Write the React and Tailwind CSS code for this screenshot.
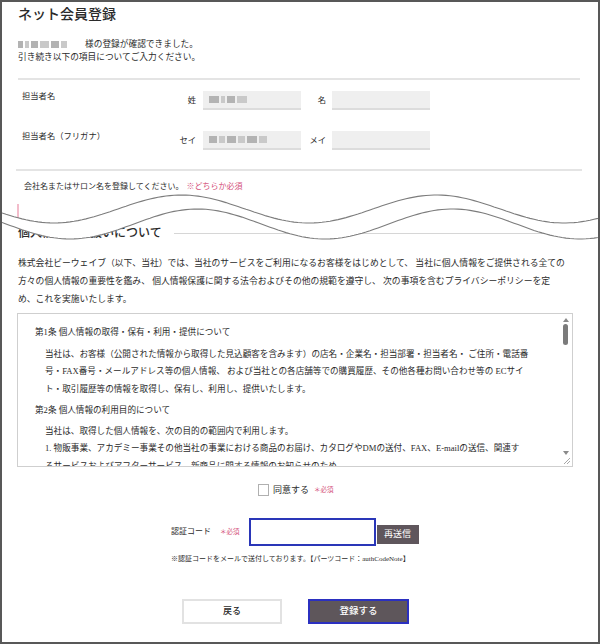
import React from 'react';

const PINK = 'text-[#d4507a]';

// 破れ目の波線（上下2本）
const PERIOD = 255;
const wavePoints = (base, amp, shift, top) => {
  const pts = [];
  for (let x = -4; x <= 604; x += 4) {
    const y = base + amp * Math.cos((2 * Math.PI * (x - shift)) / PERIOD) - top;
    pts.push([x, +y.toFixed(1)]);
  }
  return pts;
};

const WAVE_TOP = 185;
const upper = wavePoints(209, 14, 52, WAVE_TOP);
const lower = wavePoints(224, 15, 68, WAVE_TOP);
const toLine = (pts) => pts.map((p, i) => (i === 0 ? 'M' : 'L') + p[0] + ',' + p[1]).join(' ');
const band = toLine(upper) + ' ' + [...lower].reverse().map((p) => 'L' + p[0] + ',' + p[1]).join(' ') + ' Z';

const Blur = ({ parts, className = '' }) => (
  <span className={'inline-flex items-center gap-[2px] blur-[0.7px] ' + className}>
    {parts.map((w, i) => (
      <span key={i} className={i % 2 ? 'h-[7px] bg-[#c9c9c9]' : 'h-[7px] bg-[#b3b3b3]'} style={{ width: w }} />
    ))}
  </span>
);

const Field = ({ children }) => (
  <div className="ml-[5px] w-[98px] h-[19px] bg-[#efefef] border-b-2 border-[#dcdcdc] flex items-center pl-[6px]">
    {children}
  </div>
);

const App = () => {
  return (
    <div className="w-[600px] h-[644px] border-2 border-[#585858] bg-white relative overflow-hidden text-[#2b2b2b] font-['Liberation_Serif','Noto_Sans_CJK_JP',serif]">
      <div className="pl-4 pr-[18px] pt-[3px]">
        <h1 className="text-[14px] leading-[20px] font-medium">ネット会員登録</h1>

        <div className="mt-[13px] text-[8.7px] leading-[13px]">
          <div className="flex items-center">
            <span className="w-[47px] flex">
              <Blur parts={[5, 4, 7, 9, 8, 6]} />
            </span>
            <span className="ml-[20px]">様の登録が確認できました。</span>
          </div>
          <div>引き続き以下の項目についてご入力ください。</div>
        </div>

        <div className="mt-[14px] h-[2px] bg-[#e4e4e4]" />

        {/* 担当者名 */}
        <div className="mt-[11px] flex items-start text-[8.3px] leading-[12px]">
          <div className="w-[160px] pl-[4px]">担当者名</div>
          <div className="flex items-center">
            <span className="w-[20px] text-right pr-[2px]">姓</span>
            <Field>
              <Blur parts={[10, 4, 8, 10]} />
            </Field>
            <span className="w-[26px] text-right pr-[1px]">名</span>
            <Field />
          </div>
        </div>

        <div className="mt-[21px] flex items-start text-[8.3px] leading-[12px]">
          <div className="w-[160px] pl-[4px]">担当者名（フリガナ）</div>
          <div className="flex items-center">
            <span className="w-[20px] text-right pr-[2px]">セイ</span>
            <Field>
              <Blur parts={[8, 6, 9, 7, 10, 8]} />
            </Field>
            <span className="w-[26px] text-right pr-[1px]">メイ</span>
            <Field />
          </div>
        </div>

        <div className="mt-[19px] -mx-[2px] h-[2px] bg-[#e4e4e4]" />

        <div className="mt-[10px] pl-[6px] text-[8px] leading-[12px]">
          会社名またはサロン名を登録してください。<span className={'ml-[3px] ' + PINK}>※どちらか必須</span>
        </div>

        <div className="mt-[11px] -ml-[1px] w-[2px] h-[14px] bg-[#f3bccb]" />

        {/* 個人情報の取扱い */}
        <div className="mt-[7px] mr-[7px] flex items-center">
          <h2 className="text-[12px] leading-[16px] font-medium">個人情報の取扱いについて</h2>
          <div className="ml-[12px] flex-1 h-px bg-[#d6d6d6]" />
        </div>

        <div className="mt-[13px] text-[8.8px] leading-[18px] whitespace-nowrap">
          <div>株式会社ビーウェイブ（以下、当社）では、当社のサービスをご利用になるお客様をはじめとして、 当社に個人情報をご提供される全ての</div>
          <div>方々の個人情報の重要性を鑑み、 個人情報保護に関する法令およびその他の規範を遵守し、 次の事項を含むプライバシーポリシーを定</div>
          <div>め、これを実施いたします。</div>
        </div>

        <div className="mt-[5px] -ml-[1px] w-[556px] h-[154px] border border-[#cfcfcf] relative overflow-hidden pl-[17px] pt-[10px] text-[8.6px] leading-[17.5px] whitespace-nowrap">
          <div>第1条 個人情報の取得・保有・利用・提供について</div>
          <div className="mt-[4px] pl-[10px]">
            <div>当社は、お客様（公開された情報から取得した見込顧客を含みます）の店名・企業名・担当部署・担当者名・ ご住所・電話番</div>
            <div>号・FAX番号・メールアドレス等の個人情報、 および当社との各店舗等での購買履歴、その他各種お問い合わせ等の ECサイ</div>
            <div>ト・取引履歴等の情報を取得し、保有し、利用し、提供いたします。</div>
          </div>
          <div className="mt-[4px]">第2条 個人情報の利用目的について</div>
          <div className="mt-[3px] pl-[10px]">
            <div>当社は、取得した個人情報を、次の目的の範囲内で利用します。</div>
            <div>1. 物販事業、アカデミー事業その他当社の事業における商品のお届け、カタログやDMの送付、FAX、E-mailの送信、関連す</div>
            <div>るサービスおよびアフターサービス、新商品に関する情報のお知らせのため</div>
          </div>

          {/* scrollbar */}
          <div className="absolute right-0 top-0 bottom-0 w-[13px] bg-white">
            <div className="absolute top-[4px] left-[4px] w-0 h-0 border-x-[3px] border-x-transparent border-b-[4px] border-b-[#8a8a8a]" />
            <div className="absolute top-[10px] left-[4px] w-[5px] h-[21px] rounded-full bg-[#7b7b7b]" />
            <div className="absolute bottom-[11px] left-[4px] w-0 h-0 border-x-[3px] border-x-transparent border-t-[4px] border-t-[#8a8a8a]" />
            <svg className="absolute bottom-[1px] right-[1px]" width="9" height="9" viewBox="0 0 9 9">
              <path d="M8 2 L2 8 M8 5 L5 8" stroke="#a8a8a8" strokeWidth="1" />
            </svg>
          </div>
        </div>

        {/* 同意 */}
        <div className="mt-[16px] ml-[240px] flex items-center leading-[14px]">
          <span className="w-[11px] h-[12px] border border-[#b0b0b0] bg-white" />
          <span className="ml-[4px] text-[9px]">同意する</span>
          <span className={'ml-[5px] text-[6.5px] ' + PINK}>＊必須</span>
        </div>

        {/* 認証コード */}
        <div className="mt-[21px] ml-[153px] flex items-center h-[28px]">
          <span className="text-[8px] leading-[10px]">認証コード</span>
          <span className={'ml-[9px] text-[6.5px] leading-[10px] ' + PINK}>＊必須</span>
          <div className="ml-[9px] w-[127px] h-[28px] border-2 border-[#2a36b8] bg-white" />
          <button className="ml-[1px] mt-[5px] w-[42px] h-[19px] bg-[#5f565c] text-white text-[9px] leading-none">
            再送信
          </button>
        </div>

        <div className="mt-[8px] ml-[153px] text-[7px] leading-[10px] whitespace-nowrap">
          ※認証コードをメールで送付しております。【パーツコード：authCodeNote】
        </div>

        <div className="mt-[35px] ml-[164px] flex">
          <button className="w-[100px] h-[25px] border-2 border-[#e2e2e2] bg-white text-[9px] font-medium">戻る</button>
          <button className="ml-[26px] w-[101px] h-[25px] border-2 border-[#2b30c0] bg-[#5e565b] text-white text-[9.5px] font-medium">
            登録する
          </button>
        </div>
      </div>

      {/* 破れ目 */}
      <svg
        className="absolute -left-[2px] pointer-events-none"
        style={{ top: WAVE_TOP - 2 }}
        width="604"
        height="70"
        viewBox="-2 0 604 70"
      >
        <path d={band} fill="#ffffff" />
        <path d={toLine(upper)} fill="none" stroke="#7c7c7c" strokeWidth="1.1" />
        <path d={toLine(lower)} fill="none" stroke="#7c7c7c" strokeWidth="1.1" />
      </svg>
    </div>
  );
};

export default App;
